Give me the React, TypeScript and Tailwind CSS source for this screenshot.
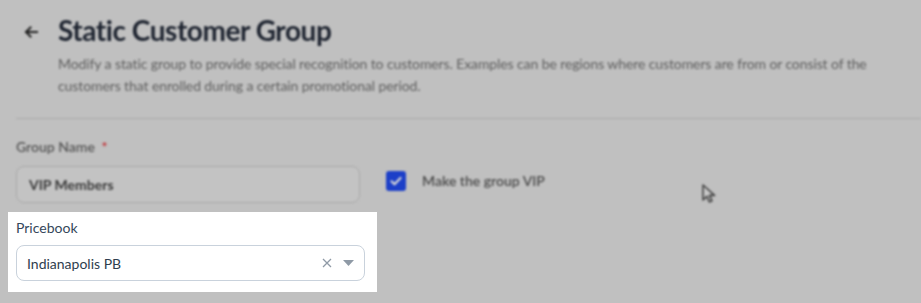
import React from "react";

export default function App() {
  return (
    <div
      className="w-[921px] h-[303px] bg-[#c0c0c0] overflow-hidden relative"
      style={{ fontFamily: "Lato, 'Open Sans', sans-serif" }}
    >
      {/* Blurred header */}
      <div className="blur-[0.8px]">
        <div className="flex items-start pl-[23px] pt-[13px]">
          <svg width="16" height="16" viewBox="0 0 16 16" className="mt-[11px] text-[#222]">
            <path d="M14 8H3M7.5 3.5L3 8l4.5 4.5" fill="none" stroke="currentColor" strokeWidth="2" strokeLinecap="square" />
          </svg>
          <div className="ml-[19px]">
            <h1 className="text-[28px] leading-[34px] font-bold text-[#1e2430] tracking-[-0.45px]">
              Static Customer Group
            </h1>
            <p className="mt-[6px] text-[14px] leading-[22px] text-[#5e5e5e] w-[830px] tracking-[-0.1px]">
              Modify a static group to provide special recognition to customers. Examples can be regions where customers are from or consist of the customers that enrolled during a certain promotional period.
            </p>
          </div>
        </div>
        <div className="ml-[16px] mt-[21px] h-px bg-[#a9a9a9]" />
        <div className="flex items-start pl-[16px] pt-[20px]">
          <div className="w-[344px]">
            <div className="text-[14px] leading-[16px] text-[#555] font-semibold">
              Group Name <span className="text-[#c0262b] ml-[3px]">*</span>
            </div>
            <div className="mt-[11px] h-[37px] rounded-[8px] border border-[#a8a8a8] bg-[#c3c3c3] flex items-center pl-[12px] text-[14px] font-bold text-[#3a3a3a]">
              VIP Members
            </div>
          </div>
          <div className="ml-[26px] mt-[31px] flex items-center">
            <div className="w-[20px] h-[20px] rounded-[3px] bg-[#1c3fc8] flex items-center justify-center">
              <svg width="14" height="14" viewBox="0 0 14 14">
                <path d="M2.5 7.3l3 3 6-6.3" fill="none" stroke="#d8d8d8" strokeWidth="2.2" strokeLinecap="round" strokeLinejoin="round" />
              </svg>
            </div>
            <span className="ml-[16px] text-[14px] font-semibold text-[#4a4a4a]">Make the group VIP</span>
          </div>
          <svg width="18" height="22" viewBox="0 0 18 22" className="ml-[155px] mt-[44px]">
            <path d="M3 2v15l3.8-3.6 2.6 5.6 2.6-1.2-2.6-5.4h5.2z" fill="#c8c8c8" stroke="#444" strokeWidth="1.6" strokeLinejoin="round" />
          </svg>
        </div>
      </div>

      {/* Highlighted Pricebook section */}
      <div className="ml-[8px] mt-[7px] w-[369px] h-[80px] bg-white px-[8px] pt-[7px]">
        <div className="text-[14px] leading-[17px] text-[#35475a]">Pricebook</div>
        <div className="mt-[9px] h-[36px] w-[349px] rounded-[8px] border border-[#c9d2dc] flex items-center pl-[10px] pr-[10px]">
          <span className="flex-1 text-[14px] text-[#2f3e4e]">Indianapolis PB</span>
          <svg width="10" height="10" viewBox="0 0 10 10" className="mr-[11px]">
            <path d="M1 1l8 8M9 1l-8 8" stroke="#8f9aa6" strokeWidth="1.3" />
          </svg>
          <svg width="11" height="6" viewBox="0 0 11 6">
            <path d="M0 0h11L5.5 6z" fill="#8f9aa6" />
          </svg>
        </div>
      </div>
    </div>
  );
}
